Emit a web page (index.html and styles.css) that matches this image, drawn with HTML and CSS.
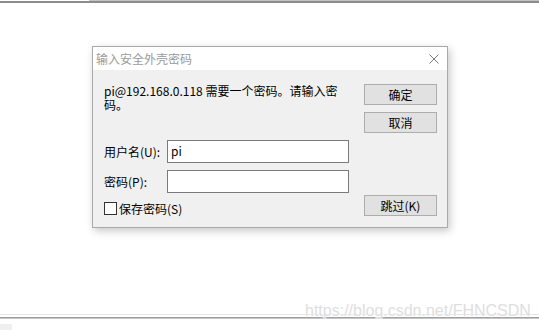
FILE: index.html
```html
<!DOCTYPE html>
<html lang="zh-CN">
<head>
<meta charset="utf-8">
<title>输入安全外壳密码</title>
<link rel="stylesheet" href="styles.css">
</head>
<body>
<div class="screen">
  <div class="topbar">
    <div class="topbar-hi"></div>
    <div class="topbar-line"></div>
  </div>
  <div class="desk">
    <div class="dialog">
      <div class="titlebar">
        <span class="title">输入安全外壳密码</span>
        <svg class="close" width="10" height="10" viewBox="0 0 10 10"><path d="M0.5 0.5 L9.5 9.5 M9.5 0.5 L0.5 9.5" stroke="#7a7a7a" stroke-width="1" fill="none"/></svg>
      </div>
      <div class="body">
        <div class="main">
          <p class="msg">pi@192.168.0.118 需要一个密码。请输入密<br>码。</p>
          <div class="field">
            <span class="lbl">用户名(U):</span>
            <div class="input">pi</div>
          </div>
          <div class="field">
            <span class="lbl">密码(P):</span>
            <div class="input"></div>
          </div>
          <div class="check">
            <span class="box"></span>
            <span class="check-text">保存密码(S)</span>
          </div>
        </div>
        <div class="actions">
          <div class="btn">确定</div>
          <div class="btn">取消</div>
          <div class="btn btn-skip">跳过(K)</div>
        </div>
      </div>
    </div>
  </div>
  <div class="bottom">
    <div class="bottom-light"></div>
    <div class="bottom-gap"></div>
    <div class="bottom-dark"></div>
    <div class="bottom-mid"></div>
    <div class="bottom-rest"><div class="corner"></div></div>
  </div>
  <div class="watermark">https://blog.csdn.net/FHNCSDN</div>
</div>
</body>
</html>
```

FILE: styles.css
```css
* { box-sizing: border-box; }
html, body { margin: 0; padding: 0; background: #ffffff; }
body { font-family: "Noto Sans CJK SC", "Noto Sans", sans-serif; font-size: 12px; color: #000; }

.screen { position: relative; width: 539px; height: 330px; overflow: hidden; display: flex; flex-direction: column; }

.topbar { height: 3px; display: flex; flex-direction: column; }
.topbar-hi { height: 1px; background: linear-gradient(to right, #ffffff 0, #ffffff 89px, #c4c4c4 89px, #c4c4c4 100%); }
.topbar-line { height: 2px; background: #8c8c8c; }

.desk { height: 312px; padding-top: 43px; padding-left: 92px; }

.dialog {
  width: 356px; height: 182px;
  border: 1px solid #a9a9a9;
  background: #f0f0f0;
  box-shadow: 2px 3px 8px rgba(0,0,0,0.22);
  display: flex; flex-direction: column;
}
.titlebar {
  height: 23px; background: #ffffff;
  display: flex; align-items: center; justify-content: space-between;
  padding: 0 8px 0 3px;
}
.title { color: #9a9a9a; line-height: 14px; }
.close { display: block; margin-top: 1px; }

.body { flex: 1; display: flex; gap: 15px; padding: 14px 10px 11px 11px; }
.main { width: 245px; display: flex; flex-direction: column; }
.msg { margin: 0; line-height: 14px; }
.field { display: flex; align-items: center; height: 23px; margin-top: 7px; }
.msg + .field { margin-top: 28px; }
.lbl { width: 63px; line-height: 14px; }
.input { width: 182px; height: 23px; background: #fff; border: 1px solid #7a7a7a; padding-left: 3px; line-height: 19px; }
.check { display: flex; align-items: center; height: 13px; margin-top: 9px; }
.box { width: 13px; height: 13px; border: 1px solid #333; background: #fff; margin-right: 2px; }
.check-text { line-height: 14px; }

.actions { width: 73px; display: flex; flex-direction: column; gap: 7px; }
.btn { height: 21px; border: 1px solid #adadad; background: #e1e1e1; display: flex; align-items: center; justify-content: center; line-height: 14px; }
.btn-skip { margin-top: auto; }

.bottom { display: flex; flex-direction: column; flex: 1; }
.bottom-light { height: 1px; background: #e4e4e4; }
.bottom-gap { height: 2px; background: #ffffff; }
.bottom-dark { height: 1px; background: #9e9e9e; }
.bottom-mid { height: 1px; background: #c6c6c6; }
.bottom-rest { flex: 1; display: flex; padding-top: 5px; }
.corner { width: 12px; height: 6px; background: #efefef; }

.watermark {
  position: absolute; left: 305px; top: 303px;
  font-family: "Liberation Sans", Arial, sans-serif; font-size: 16px; line-height: 16px;
  color: #dedede;
  text-shadow: 0 0 2px #fff, 0 0 2px #fff;
}
```
